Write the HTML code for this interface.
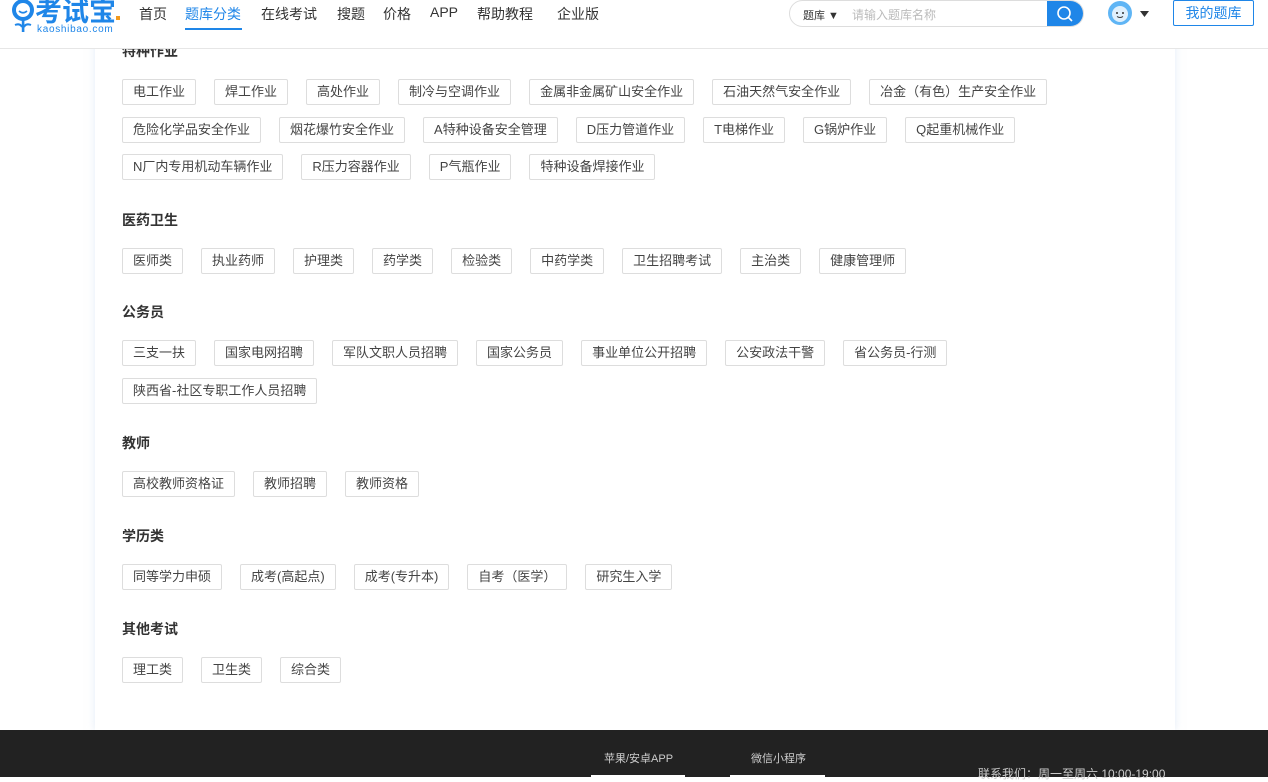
<!DOCTYPE html>
<html><head><meta charset="utf-8"><style>
*{box-sizing:border-box;margin:0;padding:0}
body{width:1268px;height:777px;overflow:hidden;background:#fff;font-family:"Liberation Sans","Noto Sans CJK SC",sans-serif;color:#333;position:relative}
.hdr{position:absolute;left:0;top:0;width:1268px;height:49px;background:#fff;border-bottom:1px solid #e6e6e6;z-index:5}
.logo{position:absolute;left:6px;top:-9px}
.nav{position:absolute;top:4px;left:139px;font-size:14px;color:#333}
.nav span{position:absolute;white-space:nowrap}
.nav .on{color:#1f86e8}
.uline{position:absolute;left:185px;top:28px;width:57px;height:2px;background:#1f86e8}
.search{position:absolute;left:789px;top:0;width:295px;height:27px;border:1px solid #ddd;border-radius:14px;overflow:hidden;font-size:11px}
.search .t{position:absolute;left:13px;top:6px;color:#333}
.search .p{position:absolute;left:62px;top:5px;color:#bbb;font-size:12px}
.search .b{position:absolute;right:0;top:0;width:36px;height:27px;background:#1f86e8}
.mybtn{position:absolute;left:1173px;top:0;width:81px;height:26px;border:1px solid #1f86e8;border-radius:2px;color:#1f86e8;font-size:14px;text-align:center;line-height:24px}
.card{position:absolute;left:95px;top:0;width:1080px;height:730px;background:#fff;box-shadow:0 0 8px rgba(200,215,240,.5)}
.sec{position:absolute;left:122px;width:1040px}
.sec h3{font-size:14px;font-weight:bold;height:20px;line-height:20px;color:#333}
.tags{margin-top:18px}
.tags span{display:inline-block;height:26px;line-height:24px;border:1px solid #ddd;border-radius:2px;padding:0 10px;font-size:13px;color:#444;margin:0 18px 11.5px 0;white-space:nowrap}
.ft{position:absolute;left:0;top:730px;width:1268px;height:47px;background:#222;color:#ccc;font-size:11px}
</style></head><body>
<div class="card"></div>

<div class="sec" style="top:41px"><h3>特种作业</h3><div class="tags">
<span>电工作业</span><span>焊工作业</span><span>高处作业</span><span>制冷与空调作业</span><span>金属非金属矿山安全作业</span><span>石油天然气安全作业</span><span>冶金（有色）生产安全作业</span><br>
<span>危险化学品安全作业</span><span>烟花爆竹安全作业</span><span>A特种设备安全管理</span><span>D压力管道作业</span><span>T电梯作业</span><span>G锅炉作业</span><span>Q起重机械作业</span><br>
<span>N厂内专用机动车辆作业</span><span>R压力容器作业</span><span>P气瓶作业</span><span>特种设备焊接作业</span></div></div>

<div class="sec" style="top:210px"><h3>医药卫生</h3><div class="tags">
<span>医师类</span><span>执业药师</span><span>护理类</span><span>药学类</span><span>检验类</span><span>中药学类</span><span>卫生招聘考试</span><span>主治类</span><span>健康管理师</span></div></div>

<div class="sec" style="top:302px"><h3>公务员</h3><div class="tags">
<span>三支一扶</span><span>国家电网招聘</span><span>军队文职人员招聘</span><span>国家公务员</span><span>事业单位公开招聘</span><span>公安政法干警</span><span>省公务员-行测</span><br>
<span>陕西省-社区专职工作人员招聘</span></div></div>

<div class="sec" style="top:433px"><h3>教师</h3><div class="tags">
<span>高校教师资格证</span><span>教师招聘</span><span>教师资格</span></div></div>

<div class="sec" style="top:526px"><h3>学历类</h3><div class="tags">
<span>同等学力申硕</span><span>成考(高起点)</span><span>成考(专升本)</span><span>自考（医学）</span><span>研究生入学</span></div></div>

<div class="sec" style="top:619px"><h3>其他考试</h3><div class="tags">
<span>理工类</span><span>卫生类</span><span>综合类</span></div></div>

<div class="hdr">
 <div class="logo">
  <svg width="124" height="46" viewBox="0 0 124 46">
   <circle cx="17" cy="19" r="11" fill="#1f86e8"/><circle cx="17" cy="19" r="7" fill="#fff"/>
   <path d="M13 20 q4 3.5 8 0" stroke="#1f86e8" stroke-width="1.6" fill="none"/>
   <rect x="15.8" y="29" width="2.6" height="12" fill="#1f86e8"/>
   <path d="M9 34 q5 -2 7 2 M25 34 q-5 -2 -7 2" stroke="#1f86e8" stroke-width="2" fill="none"/>
   <text x="29" y="30" font-size="27" font-weight="bold" fill="#1f86e8" font-family="Noto Sans CJK SC,sans-serif">考试宝</text>
   <rect x="110" y="25" width="4" height="4" fill="#f39a1e"/>
   <text x="31" y="41" font-size="10" fill="#1f86e8" font-family="Liberation Sans,sans-serif" letter-spacing=".7">kaoshibao.com</text>
  </svg>
 </div>
 <div class="nav">
  <span style="left:0">首页</span><span class="on" style="left:46px">题库分类</span><span style="left:122px">在线考试</span><span style="left:198px">搜题</span><span style="left:244px">价格</span><span style="left:291px">APP</span><span style="left:338px">帮助教程</span><span style="left:418px">企业版</span>
 </div>
 <div class="uline"></div>
 <div class="search"><span class="t">题库 ▼</span><span class="p">请输入题库名称</span><div class="b"><svg width="36" height="27"><circle cx="17" cy="12" r="6" stroke="#fff" stroke-width="1.6" fill="none"/><path d="M21.5 16.5 L25 20" stroke="#fff" stroke-width="1.6"/></svg></div></div>
 <svg style="position:absolute;left:1107px;top:1px" width="46" height="26"><circle cx="13" cy="12" r="12" fill="#5fb5f5"/><circle cx="13" cy="13" r="8" fill="#dff0fd"/><circle cx="10" cy="12" r="1" fill="#333"/><circle cx="16" cy="12" r="1" fill="#333"/><path d="M10 15.5 q3 2 6 0" stroke="#333" fill="none"/><path d="M33 10 h9 l-4.5 6z" fill="#333"/></svg>
 <div class="mybtn">我的题库</div>
</div>

<div class="ft">
 <span style="position:absolute;left:604px;top:20px">苹果/安卓APP</span>
 <span style="position:absolute;left:751px;top:20px">微信小程序</span>
 <div style="position:absolute;left:591px;top:45px;width:94px;height:5px;background:#fff"></div>
 <div style="position:absolute;left:730px;top:45px;width:95px;height:5px;background:#fff"></div>
 <span style="position:absolute;left:978px;top:35px;font-size:12px">联系我们：周一至周六 10:00-19:00</span>
</div>
</body></html>
